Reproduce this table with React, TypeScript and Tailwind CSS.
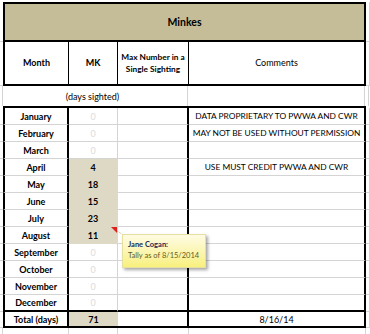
const rows = [
  { m: "January", v: 0, c: "DATA PROPRIETARY TO PWWA AND CWR" },
  { m: "February", v: 0, c: "MAY NOT BE USED WITHOUT PERMISSION" },
  { m: "March", v: 0, c: "" },
  { m: "April", v: 4, c: "USE MUST CREDIT PWWA AND CWR" },
  { m: "May", v: 18, c: "" },
  { m: "June", v: 15, c: "" },
  { m: "July", v: 23, c: "" },
  { m: "August", v: 11, c: "", note: true },
  { m: "September", v: 0, c: "" },
  { m: "October", v: 0, c: "" },
  { m: "November", v: 0, c: "" },
  { m: "December", v: 0, c: "" },
];

const grid = "border-[#d4d4d4]";

export default function App() {
  return (
    <div
      className="relative h-[334px] w-[370px] overflow-hidden bg-white text-[9px] leading-none text-black"
      style={{ fontFamily: "Lato, 'Open Sans', sans-serif" }}
    >
      {/* title */}
      <div className="flex h-[42px] border-b border-[#d4d4d4] pt-[2px]">
        <div className="w-[3px]" />
        <div className="flex h-[40px] w-[363px] items-center justify-center border-2 border-black bg-[#c4bd97] text-[10.5px] font-bold">
          Minkes
        </div>
        <div className="w-[4px] border-r border-[#d4d4d4]" />
      </div>

      {/* header */}
      <div className="-mt-px flex h-[45px]">
        <div className={`w-[3px] border-b ${grid}`} />
        <div className="flex w-[66px] items-center justify-center border-b-2 border-l-2 border-r border-black font-bold">
          Month
        </div>
        <div className="flex w-[49px] items-center justify-center border-b-2 border-r border-black font-bold">
          MK
        </div>
        <div className="flex w-[71px] items-center justify-center whitespace-nowrap border-b-2 border-r border-black text-center text-[8.3px] font-bold leading-[12px]">
          Max Number in a
          <br />
          Single Sighting
        </div>
        <div className="flex w-[177px] items-center justify-center border-b-2 border-r-2 border-black">
          Comments
        </div>
        <div className={`w-[4px] border-b border-r ${grid}`} />
      </div>

      {/* days sighted */}
      <div className="flex h-[20px]">
        <div className={`w-[3px] border-r ${grid}`} />
        <div className="w-[65px]" />
        <div className="relative flex w-[49px] items-center justify-center whitespace-nowrap">
          (days sighted)
        </div>
        <div className={`w-[71px] border-r ${grid}`} />
        <div className={`w-[177px] border-r ${grid}`} />
        <div className={`w-[4px] border-r ${grid}`} />
      </div>

      {/* thick rule */}
      <div className="flex h-[2px]">
        <div className="w-[3px]" />
        <div className="w-[363px] bg-black" />
      </div>

      {rows.map((r, i) => {
        const last = i === rows.length - 1;
        const bottom = last ? "border-b-2 border-b-black" : `border-b border-b-[#d4d4d4]`;
        const filled = r.v > 0;
        return (
          <div key={r.m} className="flex h-[17px]">
            <div className={`w-[3px] border-b ${grid}`} />
            <div className={`flex w-[66px] items-center justify-center border-x-2 border-x-black font-bold ${bottom}`}>
              {r.m}
            </div>
            <div
              className={`relative flex w-[49px] items-center justify-center ${
                filled
                  ? "border-b border-r border-transparent bg-[#ddd9c4] font-bold"
                  : `border-r border-r-[#d4d4d4] text-[#dcdcdc] ${bottom}`
              } ${last ? "border-b-2 border-b-black" : ""}`}
            >
              {r.v}
              {r.note && (
                <svg className="absolute right-0 top-0" width="6" height="6" viewBox="0 0 6 6">
                  <polygon points="0,0 6,0 6,6" fill="#e0201a" />
                </svg>
              )}
            </div>
            <div className={`w-[71px] border-r-2 border-r-black ${bottom}`} />
            <div
              className={`flex w-[177px] items-center justify-center whitespace-nowrap border-r-2 border-r-black text-[8.4px] ${bottom}`}
            >
              {r.c}
            </div>
            <div className={`w-[4px] border-b border-r ${grid}`} />
          </div>
        );
      })}

      {/* total */}
      <div className="flex h-[16px]">
        <div className={`w-[3px] border-b ${grid}`} />
        <div className="flex w-[66px] items-center justify-center border-x-2 border-b-2 border-black font-bold">
          Total (days)
        </div>
        <div className="flex w-[49px] items-center justify-center border-b-2 border-black bg-[#ddd9c4] font-bold">
          71
        </div>
        <div className="w-[71px] border-b-2 border-r-2 border-black" />
        <div className="flex w-[177px] items-center justify-center border-b-2 border-r-2 border-black">
          8/16/14
        </div>
        <div className={`w-[4px] border-b border-r ${grid}`} />
      </div>

      <div className="flex h-[6px]">
        <div className={`w-[3px] border-r ${grid}`} />
        <div className={`w-[66px] border-r ${grid}`} />
        <div className={`w-[49px] border-r ${grid}`} />
        <div className={`w-[71px] border-r ${grid}`} />
        <div className={`w-[177px] border-r ${grid}`} />
      </div>

      {/* comment note */}
      <svg className="absolute left-[116px] top-[230px]" width="10" height="8" viewBox="0 0 10 8">
        <line x1="1" y1="1" x2="9" y2="6" stroke="#b8b070" strokeWidth="1" strokeDasharray="1 1" />
      </svg>
      <div className="absolute left-[122px] top-[234px] flex h-[34px] w-[84px] flex-col gap-[3px] border border-[#e6e0a0] bg-gradient-to-b from-[#fffbe3] to-[#f8f07c] px-[5px] pt-[6px] text-[7.5px] shadow-[2px_2px_3px_rgba(0,0,0,0.35)]">
        <span className="font-bold text-[#1c2a55]">Jane Cogan:</span>
        <span className="whitespace-nowrap text-[#5f5b2a]">Tally as of 8/15/2014</span>
      </div>
    </div>
  );
}
